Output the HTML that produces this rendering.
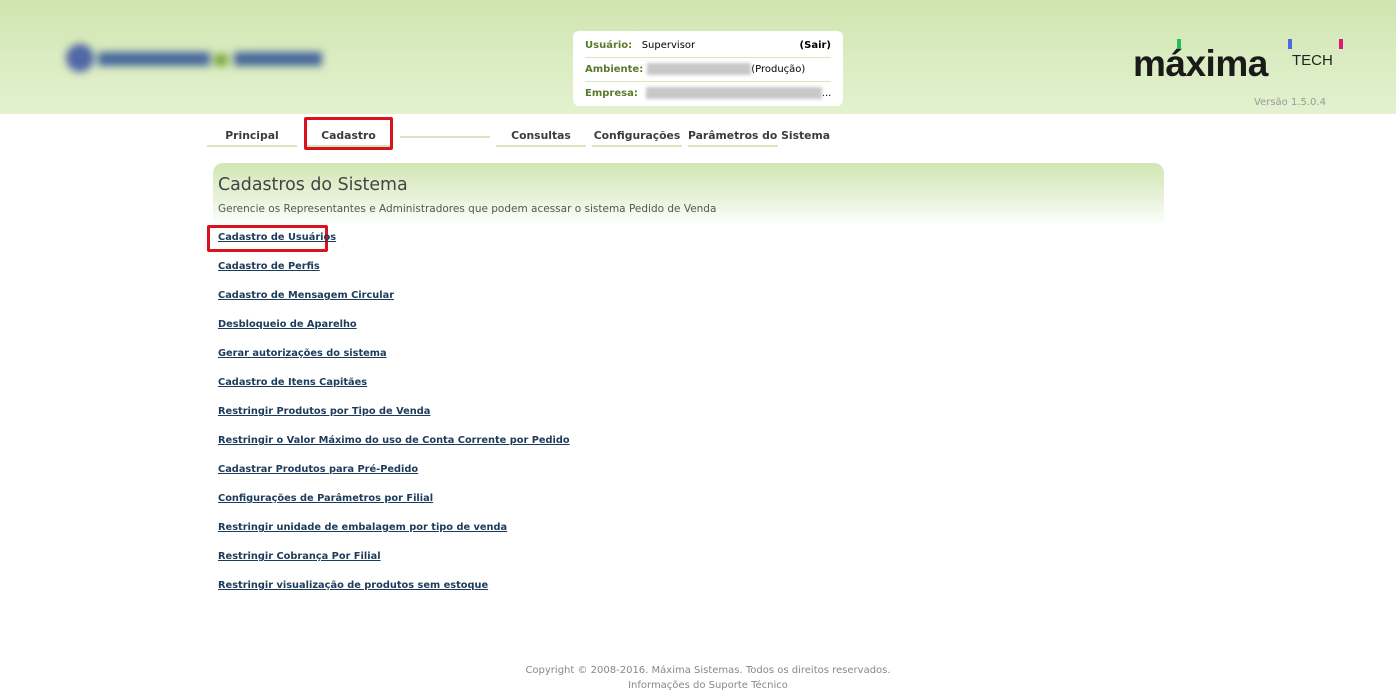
<!DOCTYPE html>
<html><head><meta charset="utf-8"><style>
body{margin:0;width:1396px;height:681px;overflow:hidden;background:#fff;font-family:"DejaVu Sans","Liberation Sans",sans-serif;position:relative}
.hdr{position:absolute;left:0;top:0;width:1396px;height:114px;background:linear-gradient(180deg,#cfe5b0 0%,#dcedc4 60%,#e3f1cf 100%)}
.logo{position:absolute;left:62px;top:40px;width:262px;height:36px;filter:blur(4px)}
.box{position:absolute;left:573px;top:31px;width:270px;height:75px;background:#fff;border-radius:6px;font-size:10px;white-space:nowrap}
.row{position:absolute;left:12px;right:12px;height:23px;border-bottom:1px solid #d9e6c6;line-height:23px}
.row b{color:#5a7a2a}
.blur{display:inline-block;height:12px;background:#c8c8c8;filter:blur(1.5px);vertical-align:middle}
.nav{position:absolute;top:129px;font-size:10.8px;font-weight:bold;color:#3c3c3c;text-align:center;border-bottom:2px solid #d7e6c0;height:16px;white-space:nowrap}
.panel{position:absolute;left:213px;top:163px;width:951px;height:62px;border-radius:10px 10px 0 0;background:linear-gradient(180deg,#d2e6b4,#e9f3dc 60%,#fff)}
a{position:absolute;left:218px;font-size:9.8px;font-weight:bold;color:#1d3b5a;text-decoration:underline;white-space:nowrap}
.red{position:absolute;border:3px solid #d9121b;border-radius:2px}
</style></head><body>
<div class="hdr"></div>
<div class="logo"><div style="position:absolute;left:4px;top:4px;width:28px;height:28px;border-radius:50%;background:#5066a6"></div><div style="position:absolute;left:36px;top:12px;width:112px;height:14px;background:#47679a"></div><div style="position:absolute;left:152px;top:14px;width:14px;height:12px;background:#7ba640"></div><div style="position:absolute;left:172px;top:12px;width:88px;height:14px;background:#47679a"></div></div>
<div class="box">
<div class="row" style="top:3px"><b>Usuário:</b> &nbsp;&nbsp;Supervisor<span style="position:absolute;right:0;font-weight:bold">(Sair)</span></div>
<div class="row" style="top:27px"><b>Ambiente:</b><span class="blur" style="width:104px;margin-left:4px"></span>(Produção)</div>
<div class="row" style="top:51px;border:0"><b>Empresa:</b><span class="blur" style="width:176px;margin-left:8px"></span>...</div>
</div>
<div style="position:absolute;left:1133px;top:47px;font:bold 37px 'Liberation Sans',sans-serif;color:#1a1a1a;letter-spacing:-0.5px;line-height:34px">máxima</div>
<div style="position:absolute;left:1292px;top:52px;font:15px 'Liberation Sans',sans-serif;color:#222">TECH</div>
<div style="position:absolute;left:1177px;top:39px;width:4px;height:10px;background:#1fc25a"></div>
<div style="position:absolute;left:1288px;top:39px;width:4px;height:10px;background:#4a6ae0"></div>
<div style="position:absolute;left:1339px;top:39px;width:4px;height:10px;background:#e01a78"></div>
<div style="position:absolute;left:1254px;top:97px;font-size:10px;color:#999">Versão 1.5.0.4</div>
<div class="nav" style="left:207px;width:90px">Principal</div>
<div class="nav" style="left:305px;width:87px">Cadastro</div>
<div class="nav" style="left:400px;width:90px;top:136px;height:0"></div>
<div class="nav" style="left:496px;width:90px">Consultas</div>
<div class="nav" style="left:592px;width:90px">Configurações</div>
<div class="nav" style="left:688px;width:90px;text-align:left">Parâmetros do Sistema</div>
<div class="red" style="left:304px;top:117px;width:83px;height:27px"></div>
<div class="panel"></div>
<div style="position:absolute;left:218px;top:175px;font-size:17.4px;color:#444">Cadastros do Sistema</div>
<div style="position:absolute;left:218px;top:203px;font-size:10.5px;color:#555;white-space:nowrap">Gerencie os Representantes e Administradores que podem acessar o sistema Pedido de Venda</div>
<div class="red" style="left:207px;top:225px;width:115px;height:21px"></div>
<a style="top:232px">Cadastro de Usuários</a>
<a style="top:261px">Cadastro de Perfis</a>
<a style="top:290px">Cadastro de Mensagem Circular</a>
<a style="top:319px">Desbloqueio de Aparelho</a>
<a style="top:348px">Gerar autorizações do sistema</a>
<a style="top:377px">Cadastro de Itens Capitães</a>
<a style="top:406px">Restringir Produtos por Tipo de Venda</a>
<a style="top:435px">Restringir o Valor Máximo do uso de Conta Corrente por Pedido</a>
<a style="top:464px">Cadastrar Produtos para Pré-Pedido</a>
<a style="top:493px">Configurações de Parâmetros por Filial</a>
<a style="top:522px">Restringir unidade de embalagem por tipo de venda</a>
<a style="top:551px">Restringir Cobrança Por Filial</a>
<a style="top:580px">Restringir visualização de produtos sem estoque</a>
<div style="position:absolute;left:0;width:1416px;top:663px;text-align:center;font-size:10px;line-height:15px;color:#888">Copyright © 2008-2016. Máxima Sistemas. Todos os direitos reservados.<br>Informações do Suporte Técnico</div>
</body></html>
